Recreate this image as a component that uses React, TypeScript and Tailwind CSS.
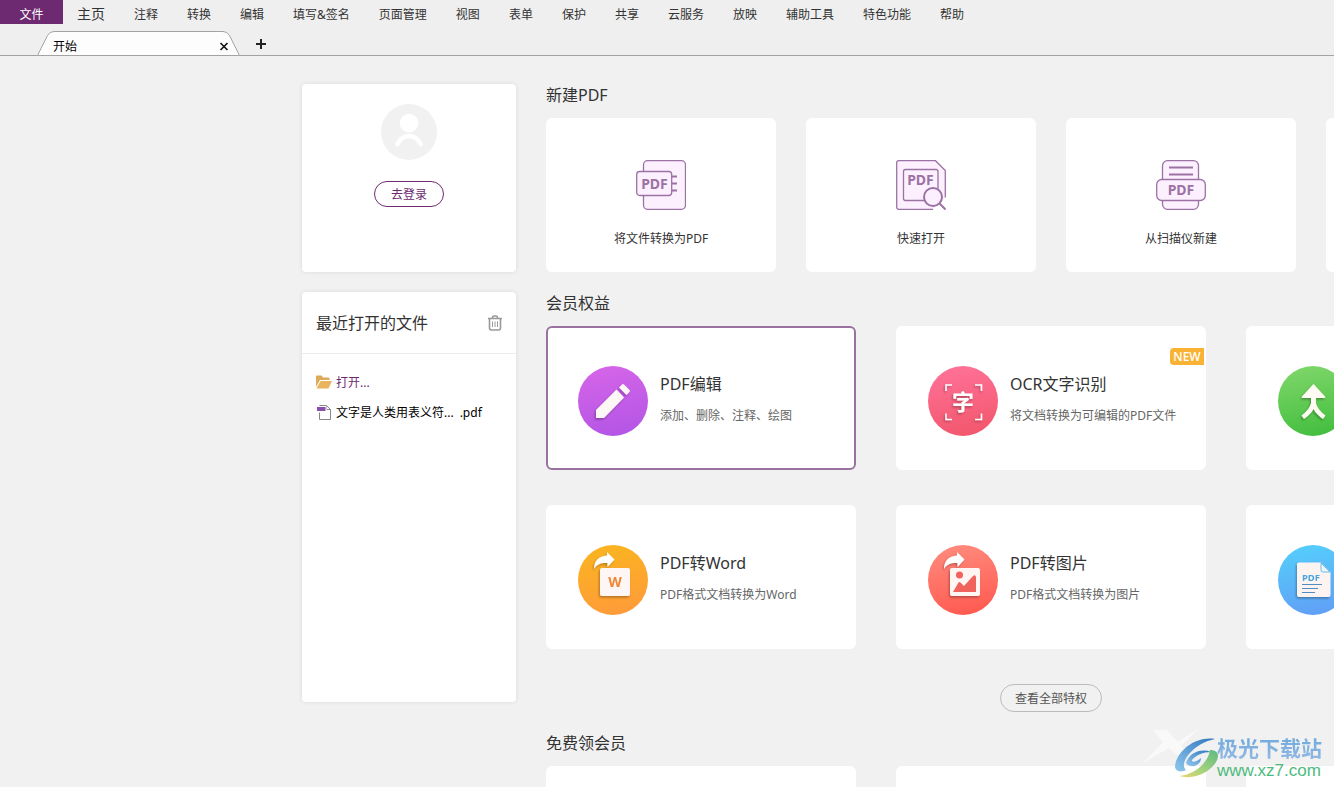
import type { ReactNode } from "react";

const menus = [
  "注释", "转换", "编辑", "填写&签名", "页面管理", "视图", "表单", "保护",
  "共享", "云服务", "放映", "辅助工具", "特色功能", "帮助",
];

const iconText = "fill-[#9b72a3] font-bold";

function ConvertIcon() {
  return (
    <svg width="50" height="50" viewBox="0 0 50 50" fill="#fcf0ff" stroke="#9b72a3" strokeWidth="1.3" aria-hidden="true">
      <rect x="7.5" y="0.7" width="42" height="48.600" rx="4" />
      <path d="M36 16.5h5M36 23.5h5M36 30.5h5" strokeWidth="1.8" />
      <rect x="0.7" y="11.5" width="35" height="24" rx="3" />
      <text x="18.5" y="28.500" fontSize="14" textAnchor="middle" stroke="none" className={iconText}>PDF</text>
    </svg>
  );
}

function QuickOpenIcon() {
  return (
    <svg width="50" height="50" viewBox="0 0 50 50" fill="#fcf0ff" stroke="#9b72a3" strokeWidth="1.3" aria-hidden="true">
      <path d="M2.5.7H39.5L49.3 10.5V38L37 49.3H2.5a2 2 0 0 1-2-2V2.5a2 2 0 0 1 2-2z" stroke="none" />
      <path d="M37 49.3H2.7a2 2 0 0 1-2-2V2.7a2 2 0 0 1 2-2H39.5L49.3 10.5V37.5" fill="none" />
      <rect x="7.5" y="9.5" width="34.5" height="31" rx="2" />
      <text x="24.5" y="25" fontSize="14" textAnchor="middle" stroke="none" className={iconText}>PDF</text>
      <circle cx="37" cy="37" r="9" strokeWidth="2" />
      <path d="M43.5 43.5L49.5 49.5" strokeWidth="2" />
    </svg>
  );
}

function ScannerIcon() {
  return (
    <svg width="50" height="50" viewBox="0 0 50 50" fill="#fcf0ff" stroke="#9b72a3" strokeWidth="1.3" aria-hidden="true">
      <rect x="6.5" y="0.7" width="36" height="48.600" rx="5" />
      <path d="M13 7.5h24M13 14.5h24" strokeWidth="1.8" />
      <rect x="0.7" y="19.5" width="48.600" height="21" rx="5" />
      <text x="25" y="35" fontSize="14" textAnchor="middle" stroke="none" className={iconText}>PDF</text>
    </svg>
  );
}

function Disc({ id, from, to, children }: { id: string; from: string; to: string; children: ReactNode }) {
  return (
    <svg width="70" height="70" viewBox="0 0 70 70" className="shrink-0" aria-hidden="true">
      <defs>
        <linearGradient id={id} x1="0.4" y1="0" x2="0.6" y2="1">
          <stop offset="0" stopColor={from} />
          <stop offset="1" stopColor={to} />
        </linearGradient>
        <filter id={id + "-shadow"} x="-20%" y="-20%" width="150%" height="150%">
          <feDropShadow dx="-1" dy="1.5" stdDeviation="1.2" floodColor="#000" floodOpacity="0.3" />
        </filter>
      </defs>
      <circle cx="35" cy="35" r="35" fill={"url(#" + id + ")"} />
      <g filter={"url(#" + id + "-shadow)"}>{children}</g>
    </svg>
  );
}

const shareArrow = "M16 24C16 15.5 21 11 29 10.5V7L36.5 14.5L29.5 22V18C23 17.5 19 19 16 24Z";

const editIcon = (
  <Disc id="edit" from="#d465e8" to="#b455e6">
    <path d="M18 52V44L38.5 23.5L46 31.5L26 52Z" fill="#fdf7f5" />
    <path d="M41 21.5L44 18.5Q45 17.5 46 18.5L51.5 24Q52.5 25 51.5 26L48.5 29Z" fill="#fdf7f5" />
  </Disc>
);

const ocrIcon = (
  <Disc id="ocr" from="#ff7198" to="#f2576c">
    <path d="M18 25V19H24M47 19H53.5V25M53.5 47.5V53.5H47M24 53.5H18V47.5" fill="none" stroke="#fff" strokeWidth="1.6" />
    <text x="35" y="43.5" fontSize="22" textAnchor="middle" fill="#fff" className="font-bold">字</text>
  </Disc>
);

const mergeIcon = (
  <Disc id="merge" from="#7dd668" to="#43be3f">
    <path d="M35.5 18L47 30.5Q48 32 46.5 32H38V37.5Q40 44 47.5 49.5L45 53Q38 48 35.5 43Q33 48 26 53L23.5 49.5Q31 44 33 37.5V32H24.5Q23 32 24 30.5Z" fill="#fffaf2" />
  </Disc>
);

const wordIcon = (
  <Disc id="word" from="#fab420" to="#ff9b3a">
    <path d={shareArrow} fill="#fff" />
    <rect x="22" y="23" width="30" height="28" rx="2" fill="#fdf6f5" />
    <text x="37" y="42" fontSize="14" textAnchor="middle" fill="#ef8636" className="font-bold">W</text>
  </Disc>
);

const imageIcon = (
  <Disc id="image" from="#ff897c" to="#ff5a50">
    <path d={shareArrow} fill="#fff" />
    <rect x="22" y="23" width="30" height="28" rx="2" fill="#fff6f4" />
    <circle cx="31.5" cy="30" r="3.5" fill="#f0645c" />
    <path d="M25 47L30.5 37.5Q31.5 36.5 33 38L36 41L44.5 31.5Q47.5 29 48 32V47Z" fill="#f0645c" />
  </Disc>
);

const documentIcon = (
  <Disc id="document" from="#55cdfb" to="#619ff6">
    <path d="M21 17.5H43L52.5 27V50Q52.5 52 50.5 52H21Q19 52 19 50V19.5Q19 17.5 21 17.5Z" fill="#fdf4f2" />
    <path d="M43 18V25Q43 27 45 27H52Z" fill="#e9f4fb" stroke="#55aee0" strokeWidth="0.8" />
    <text x="33" y="35.5" fontSize="9.5" textAnchor="middle" fill="#4ba3dd" className="font-bold">PDF</text>
    <path d="M24 39.5H44M24 43.5H40M24 47.5H37" stroke="#4f8dc4" strokeWidth="1.2" />
  </Disc>
);

const benefits = [
  { title: "PDF编辑", text: "添加、删除、注释、绘图", icon: editIcon, active: true },
  { title: "OCR文字识别", text: "将文档转换为可编辑的PDF文件", icon: ocrIcon, isNew: true },
  { title: "", text: "", icon: mergeIcon },
  { title: "PDF转Word", text: "PDF格式文档转换为Word", icon: wordIcon },
  { title: "PDF转图片", text: "PDF格式文档转换为图片", icon: imageIcon },
  { title: "", text: "", icon: documentIcon },
];

const creators = [
  { label: "将文件转换为PDF", icon: <ConvertIcon /> },
  { label: "快速打开", icon: <QuickOpenIcon /> },
  { label: "从扫描仪新建", icon: <ScannerIcon /> },
  { label: "", icon: null },
];

function Heading({ children }: { children: ReactNode }) {
  return <h2 className="mb-3 text-base leading-[22px] text-[#333]">{children}</h2>;
}

function MenuBar() {
  return (
    <nav className="flex h-6 shrink-0 items-stretch gap-[29px] whitespace-nowrap text-xs text-[#333]">
      <div className="flex gap-3.5">
        <button className="w-[63px] bg-[#6d2a71] pt-1.5 text-white">文件</button>
        <button className="pt-1 text-sm">主页</button>
      </div>
      {menus.map((m) => (
        <button key={m} className="pt-1.5">{m}</button>
      ))}
    </nav>
  );
}

function TabBar() {
  return (
    <div className="flex h-8 shrink-0 items-end border-b border-[#a3a3a3] pl-[37px]">
      <div className="relative -mb-px flex h-[25px] w-[203px] items-center justify-between pt-1.5 pr-[11px] pl-4 text-xs text-black">
        <svg className="absolute inset-0" width="203" height="25" viewBox="0 0 203 25" aria-hidden="true">
          <path d="M0.5 24.5L10.5 4.5Q12.5.5 17 .5H186Q190.5.5 192.5 4.5L202.5 24.5V25H0.5Z" fill="#fdfdfd" />
          <path d="M0.5 24.5L10.5 4.5Q12.5.5 17 .5H186Q190.5.5 192.5 4.5L202.5 24.5H0.5" fill="none" stroke="#a3a3a3" />
        </svg>
        <button className="relative">开始</button>
        <button aria-label="关闭" className="relative">
          <svg width="10" height="10" viewBox="0 0 10 10" stroke="#111" strokeWidth="1.6" aria-hidden="true">
            <path d="M1.5 1L8.5 8M8.5 1L1.5 8" />
          </svg>
        </button>
      </div>
      <button aria-label="新建标签" className="mb-1.5 ml-4">
        <svg width="10" height="10" viewBox="0 0 10 10" stroke="#222" strokeWidth="2" aria-hidden="true">
          <path d="M0 5H10M5 0V10" />
        </svg>
      </button>
    </div>
  );
}

function Sidebar() {
  return (
    <aside className="flex w-[214px] shrink-0 flex-col gap-5">
      <section className="flex h-[188px] flex-col items-center rounded bg-white pt-5 shadow-[0_0_4px_rgba(0,0,0,0.1)]">
        <svg width="56" height="56" viewBox="0 0 57 57" aria-hidden="true">
          <circle cx="28.5" cy="28.5" r="28.5" fill="#f1f1f1" />
          <circle cx="28.5" cy="19.5" r="9.5" fill="#fff" />
          <path d="M16.500 41Q20 33 28.5 32.5Q37 33 40.500 41" fill="none" stroke="#fff" strokeWidth="4.500" strokeLinecap="round" />
        </svg>
        <button className="mt-[21px] h-[26px] w-[70px] rounded-full border border-[#6d2a71] pt-0.5 text-xs text-[#6d2a71]">去登录</button>
      </section>
      <section className="h-[410px] rounded bg-white shadow-[0_0_4px_rgba(0,0,0,0.1)]">
        <header className="flex h-[62px] items-center justify-between border-b border-[#ececec] px-3.5">
          <h2 className="text-base text-[#333]">最近打开的文件</h2>
          <button aria-label="清空">
            <svg width="14" height="16" viewBox="0 0 14 16" fill="none" stroke="#999" aria-hidden="true">
              <path d="M0 3.5H14M4.5 3.5V2.5Q4.5 1 6 1H8Q9.5 1 9.5 2.5V3.5M1.5 3.5V13Q1.5 15 3.5 15H10.5Q12.5 15 12.5 13V3.5" strokeWidth="1.6" />
              <path d="M4.5 6.5V12M7 6.5V12M9.5 6.5V12" />
            </svg>
          </button>
        </header>
        <ul className="px-3.5 pt-3.5 text-xs leading-[30px] whitespace-nowrap">
          <li>
            <a href="#open" className="flex items-center gap-1 text-[#6d2a71]">
              <svg width="16" height="16" viewBox="0 0 16 16" aria-hidden="true">
                <path d="M0 13V1.5Q0 .5 1 .5H5.5L7 2.5H12.5Q13.5 2.5 13.5 3.5V5H4L0 12Z" fill="#dda95a" />
                <path d="M4.5 6H16L12.5 13.5H0.5Z" fill="#e8b45f" />
              </svg>
              打开...
            </a>
          </li>
          <li>
            <a href="#recent" className="flex items-center gap-1 text-black">
              <svg width="16" height="16" viewBox="0 0 16 16" aria-hidden="true">
                <path d="M3.5 7.5V14.5H14.5V4.5L10.5.5H3.5" fill="none" stroke="#888" />
                <path d="M10.5.5V4.5H14.5" fill="none" stroke="#888" />
                <rect x="0" y="1" width="10.500" height="6" fill="#fff" />
                <rect x="1" y="2" width="8.500" height="4" fill="#8a4fae" />
              </svg>
              <span>文字是人类用表义符...</span>
              <span className="ml-0.5">.pdf</span>
            </a>
          </li>
        </ul>
      </section>
    </aside>
  );
}

function Watermark() {
  return (
    <div className="pointer-events-none absolute right-3 bottom-1.5 flex items-start">
      <svg width="76" height="56" viewBox="0 0 76 56" className="-mr-0.5" aria-hidden="true">
        <defs>
          <linearGradient id="wm-blue" x1="1" y1="0" x2="0" y2="1">
            <stop offset="0" stopColor="#2f76c0" />
            <stop offset="1" stopColor="#8fc8ee" />
          </linearGradient>
          <linearGradient id="wm-green" x1="1" y1="0" x2="0" y2="1">
            <stop offset="0" stopColor="#5cb982" />
            <stop offset="0.6" stopColor="#a8d47c" />
            <stop offset="1" stopColor="#eed36d" />
          </linearGradient>
        </defs>
        <path d="M10 5H24L35 17L56 3L38 21L46 29H32L26 23L0 38L20 17Z" fill="#fff" opacity="0.6" />
        <path d="M72 14C52 11 34 26 32 41C32 46 37 48 43 45C39 41 41 35 46 29C53 21 62 16 72 14Z" fill="url(#wm-blue)" />
        <path d="M43 38C46 28 58 23 68 27C60 27 53 30 49 35C48 38 54 37 58 33C58 41 47 44 43 38Z" fill="url(#wm-blue)" />
        <path d="M67 25C78 25 77 35 68 43C59 51 47 54 36 51C50 50 65 39 67 25Z" fill="url(#wm-green)" />
      </svg>
      <div className="pt-[11px] leading-none whitespace-nowrap">
        <div className="bg-gradient-to-b from-[#6ca9dc] to-[#93b8e4] bg-clip-text text-[21px] leading-6 font-bold text-transparent">极光下载站</div>
        <div className="font-['Liberation_Sans',sans-serif] text-[17px] leading-[21px] text-[#4dbb7d]">www.xz7.com</div>
      </div>
    </div>
  );
}

export default function App() {
  return (
    <div className="relative flex h-screen flex-col overflow-hidden bg-[#efefef] font-['Noto_Sans','Noto_Sans_CJK_SC',sans-serif]">
      <MenuBar />
      <TabBar />
      <main className="flex min-h-0 flex-1 gap-[30px] overflow-hidden bg-[#f1f1f1] pt-7 pl-[302px]">
        <Sidebar />
        <div className="w-[1010px] shrink-0">
          <Heading>新建PDF</Heading>
          <div className="grid grid-cols-4 gap-[30px]">
            {creators.map((c, i) => (
              <button key={i} aria-label={c.label || "新建"} className="flex h-[154px] flex-col items-center rounded-md bg-white pt-[42px] text-xs text-[#333]">
                {c.icon}
                <span className="mt-[21px]">{c.label}</span>
              </button>
            ))}
          </div>
          <div className="pt-5">
            <Heading>会员权益</Heading>
          </div>
          <div className="grid grid-cols-3 gap-x-10 gap-y-[35px]">
            {benefits.map((b, i) => (
              <article
                key={i}
                className={
                  "relative flex h-36 gap-3 rounded-md border-2 bg-white px-[30px] pt-[38px] " +
                  (b.active ? "border-[#9a72a0]" : "border-white")
                }
              >
                {b.icon}
                <div className="pt-1.5 whitespace-nowrap">
                  <h3 className="text-base leading-6 text-[#333]">{b.title}</h3>
                  <p className="mt-[11px] text-xs leading-[18px] text-[#666]">{b.text}</p>
                </div>
                {b.isNew && (
                  <span className="absolute top-5 right-0 flex h-[17px] w-[34px] items-center justify-center rounded-l bg-[#f9b233] text-xs font-medium text-white">NEW</span>
                )}
              </article>
            ))}
          </div>
          <div className="flex justify-center pt-[35px] pb-5">
            <button className="h-7 w-[102px] rounded-full border border-[#bbb] pt-0.5 text-xs text-[#555]">查看全部特权</button>
          </div>
          <Heading>免费领会员</Heading>
          <div className="grid grid-cols-3 gap-10">
            <div className="h-36 rounded-md bg-white" />
            <div className="h-36 rounded-md bg-white" />
            <div className="h-36 rounded-md bg-white" />
          </div>
        </div>
      </main>
      <Watermark />
    </div>
  );
}
